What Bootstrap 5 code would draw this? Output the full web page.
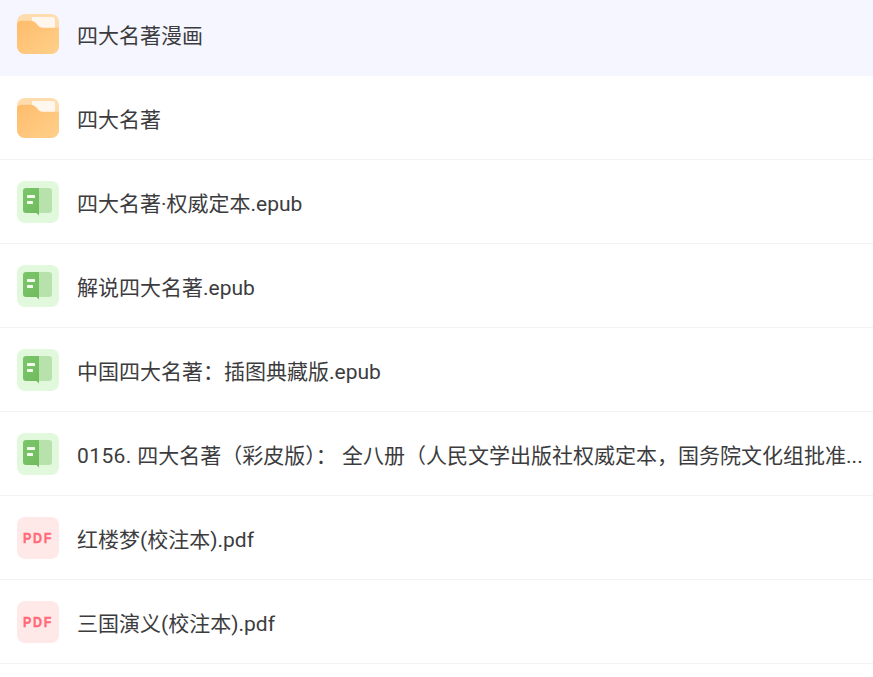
<!DOCTYPE html>
<html lang="zh"><head><meta charset="utf-8">
<link href="https://cdn.jsdelivr.net/npm/bootstrap@5.3.0/dist/css/bootstrap.min.css" rel="stylesheet">
<style>
html,body{height:677px;overflow:hidden;background:#fff}
body{font-family:Roboto,"Noto Sans CJK SC",sans-serif;color:#3c3c3e}
.file-list{margin-top:-8px}
.file-row{height:84px;padding:0 0 0 17px;gap:18px;border-bottom:1px solid #f3f3f5}
.file-row.is-active{background:#f5f6ff;border-bottom-color:#f5f6ff}
.file-icon{width:42px;height:42px;flex:none;display:block}
.file-name{font-size:21px;line-height:28px;padding-top:4px;white-space:nowrap}
.num-run{letter-spacing:.4px}
</style></head><body>
<svg width="0" height="0" class="position-absolute">
<defs>
<linearGradient id="fg" x1="0" y1="0" x2="1" y2="1"><stop offset="0" stop-color="#ffbc6c"/><stop offset="1" stop-color="#ffd08a"/></linearGradient>
<linearGradient id="bg" x1="0" y1="0" x2="1" y2="1"><stop offset="0" stop-color="#7cc66a"/><stop offset="1" stop-color="#6fbb5e"/></linearGradient>
<symbol id="ic-folder" viewBox="0 0 42 42">
<rect x="0" y="1" width="42" height="40" rx="8" fill="#ffdcae"/>
<path d="M15 4h21a2 2 0 0 1 2 2v9H15z" fill="#fff6ee"/>
<path d="M0 12a4 4 0 0 1 4-4.300h9c3 0 5 1 7 3.500c1.500 2.300 3 3.500 6 3.500h16v18.300a8 8 0 0 1-8 8H8a8 8 0 0 1-8-8z" fill="url(#fg)"/>
</symbol>
<symbol id="ic-book" viewBox="0 0 42 42">
<rect width="42" height="42" rx="8" fill="#e1f8dc"/>
<path d="M22 7h10a3 3 0 0 1 3 3v19a3 3 0 0 1-3 3H22z" fill="#b8e2ac"/>
<path d="M9 7h13v27.500l-2.500-2.500H9a3 3 0 0 1-3-3V10a3 3 0 0 1 3-3z" fill="url(#bg)"/>
<rect x="10" y="14" width="8" height="3" rx=".5" fill="#f2fbee"/>
<rect x="10" y="20" width="6" height="3" rx=".5" fill="#f2fbee"/>
</symbol>
<symbol id="ic-pdf" viewBox="0 0 42 42">
<rect width="42" height="42" rx="8" fill="#ffe8e8"/>
<text x="6" y="26" textLength="30" lengthAdjust="spacingAndGlyphs" font-family="'Liberation Sans',sans-serif" font-weight="700" font-size="15" letter-spacing="2" fill="#ff6b78" stroke="#ff6b78" stroke-width=".4">PDF</text>
</symbol>
</defs></svg>
<div class="file-list d-flex flex-column">
<div class="file-row is-active d-flex align-items-center"><svg class="file-icon"><use href="#ic-folder"/></svg><div class="file-name">四大名著漫画</div></div>
<div class="file-row d-flex align-items-center"><svg class="file-icon"><use href="#ic-folder"/></svg><div class="file-name">四大名著</div></div>
<div class="file-row d-flex align-items-center"><svg class="file-icon"><use href="#ic-book"/></svg><div class="file-name">四大名著·权威定本.epub</div></div>
<div class="file-row d-flex align-items-center"><svg class="file-icon"><use href="#ic-book"/></svg><div class="file-name">解说四大名著.epub</div></div>
<div class="file-row d-flex align-items-center"><svg class="file-icon"><use href="#ic-book"/></svg><div class="file-name">中国四大名著：插图典藏版.epub</div></div>
<div class="file-row d-flex align-items-center"><svg class="file-icon"><use href="#ic-book"/></svg><div class="file-name"><span class="num-run">0156. </span>四大名著（彩皮版）： 全八册（人民文学出版社权威定本，国务院文化组批准...</div></div>
<div class="file-row d-flex align-items-center"><svg class="file-icon"><use href="#ic-pdf"/></svg><div class="file-name">红楼梦(校注本).pdf</div></div>
<div class="file-row d-flex align-items-center"><svg class="file-icon"><use href="#ic-pdf"/></svg><div class="file-name">三国演义(校注本).pdf</div></div>
</div>
<script src="https://cdn.jsdelivr.net/npm/bootstrap@5.3.0/dist/js/bootstrap.bundle.min.js"></script>
</body></html>
